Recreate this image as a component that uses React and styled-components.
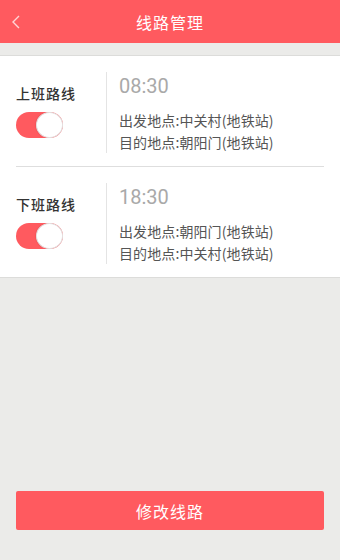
import React from 'react';
import styled, { createGlobalStyle } from 'styled-components';

const GlobalStyle = createGlobalStyle`
  html, body {
    margin: 0;
    padding: 0;
    background: #ebebe9;
    font-family: Roboto, "Noto Sans CJK SC", sans-serif;
  }
`;

const RED = '#ff5a5f';

const Page = styled.div`
  min-height: 100vh;
  display: flex;
  flex-direction: column;
  background: #ebebe9;
`;

const Header = styled.header`
  height: 43px;
  background: ${RED};
  display: grid;
  grid-template-columns: 44px 1fr 44px;
  align-items: center;
`;

const BackButton = styled.button`
  border: 0;
  background: none;
  padding: 0 0 0 11px;
  height: 43px;
  display: flex;
  align-items: center;
  cursor: pointer;
`;

const Title = styled.h1`
  margin: 0;
  text-align: center;
  color: #fff;
  font-family: "Noto Sans CJK SC", sans-serif;
  font-size: 16px;
  font-weight: 400;
  letter-spacing: 1px;
`;

const Card = styled.section`
  margin-top: 12px;
  background: #fff;
  border-top: 1px solid #dcdcda;
  border-bottom: 1px solid #dcdcda;
  padding: 0 16px;
`;

const Route = styled.div`
  display: flex;
  padding: 16px 0 13px;
  border-bottom: ${props => (props.last ? 'none' : '1px solid #dedede')};
`;

const Side = styled.div`
  width: 90px;
  flex-shrink: 0;
`;

const Label = styled.div`
  margin-top: 10px;
  line-height: 22px;
  font-family: "Noto Sans CJK SC", sans-serif;
  font-size: 14px;
  font-weight: 500;
  letter-spacing: 1px;
  color: #333;
`;

const Toggle = styled.div`
  margin-top: 8px;
  width: 47px;
  height: 26px;
  border-radius: 13px;
  background: ${props => (props.on ? RED : '#ddd')};
  display: flex;
  justify-content: ${props => (props.on ? 'flex-end' : 'flex-start')};
`;

const Knob = styled.span`
  width: 27px;
  height: 26px;
  box-sizing: border-box;
  border-radius: 50%;
  background: #fff;
  border: 1px solid #e2e2e2;
  box-shadow: -1px 0 1px rgba(0, 0, 0, 0.06);
`;

const Detail = styled.div`
  flex: 1;
  border-left: 1px solid #e4e4e4;
  padding-left: 12px;
`;

const Time = styled.div`
  padding-top: 2px;
  line-height: 24px;
  font-family: Roboto, sans-serif;
  font-size: 20px;
  color: #a9a9a9;
`;

const Place = styled.div`
  line-height: 22px;
  font-family: "Noto Sans CJK SC", sans-serif;
  font-size: 14px;
  letter-spacing: 0.1px;
  color: #555;
  margin-top: ${props => (props.first ? '11px' : '0')};
`;

const Spacer = styled.div`
  flex: 1;
`;

const SubmitButton = styled.button`
  margin: 0 16px 30px;
  height: 39px;
  border: 0;
  border-radius: 2px;
  background: ${RED};
  color: #fff;
  font-family: "Noto Sans CJK SC", sans-serif;
  font-size: 16px;
  letter-spacing: 1px;
  cursor: pointer;
`;

const routes = [
  { id: 1, name: '上班路线', time: '08:30', from: '中关村(地铁站)', to: '朝阳门(地铁站)' },
  { id: 2, name: '下班路线', time: '18:30', from: '朝阳门(地铁站)', to: '中关村(地铁站)' },
];

const BackIcon = () => (
  <svg width="10" height="14" viewBox="0 0 10 14">
    <polyline
      points="8,1 2,7 8,13"
      fill="none"
      stroke="rgba(255,255,255,0.75)"
      strokeWidth="1.4"
    />
  </svg>
);

const App = () => (
  <Page>
    <GlobalStyle />
    <Header>
      <BackButton aria-label="back">
        <BackIcon />
      </BackButton>
      <Title>线路管理</Title>
      <span />
    </Header>
    <Card>
      {routes.map((r, i) => (
        <Route key={r.id} last={i === routes.length - 1}>
          <Side>
            <Label>{r.name}</Label>
            <Toggle on>
              <Knob />
            </Toggle>
          </Side>
          <Detail>
            <Time>{r.time}</Time>
            <Place first>出发地点:{r.from}</Place>
            <Place>目的地点:{r.to}</Place>
          </Detail>
        </Route>
      ))}
    </Card>
    <Spacer />
    <SubmitButton>修改线路</SubmitButton>
  </Page>
);

export default App;
